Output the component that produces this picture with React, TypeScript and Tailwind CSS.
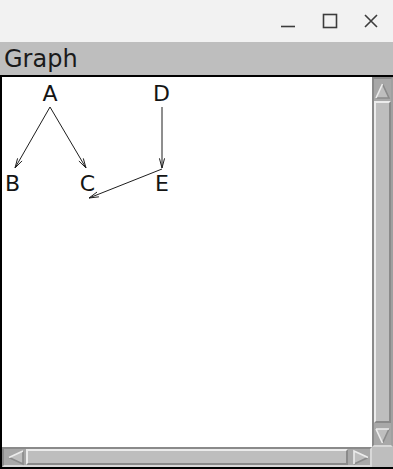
import React from "react";

type P = [number, number];

function arrowHead(from: P, to: P, len = 10, ang = 0.26): string {
  const dx = to[0] - from[0];
  const dy = to[1] - from[1];
  const a = Math.atan2(dy, dx);
  const p1: P = [to[0] - len * Math.cos(a - ang), to[1] - len * Math.sin(a - ang)];
  const p2: P = [to[0] - len * Math.cos(a + ang), to[1] - len * Math.sin(a + ang)];
  return `M${p1[0]},${p1[1]} L${to[0]},${to[1]} L${p2[0]},${p2[1]}`;
}

const edges: [P, P][] = [
  [[48, 30], [13, 91]],
  [[48, 30], [84, 91]],
  [[160, 30], [160, 91]],
  [[160, 92], [87, 121]],
];

const nodes: { t: string; x: number; y: number }[] = [
  { t: "A", x: 48, y: 23.5 },
  { t: "D", x: 159.5, y: 23.5 },
  { t: "B", x: 10.5, y: 113.5 },
  { t: "C", x: 85.5, y: 113.5 },
  { t: "E", x: 160, y: 113.5 },
];

function Arrow({ dir }: { dir: "up" | "down" | "left" | "right" }) {
  const map: Record<string, { pts: string; light: string; dark: string }> = {
    up: { pts: "8.5,2 15,16 2,16", light: "M2,16 L8.5,2", dark: "M8.5,2 L15,16 L2,16" },
    down: { pts: "2,3 15,3 8.5,17", light: "M2,3 L15,3 M2,3 L8.5,17", dark: "M15,3 L8.5,17" },
    left: { pts: "2,8.5 16,2 16,15", light: "M16,2 L2,8.5", dark: "M2,8.5 L16,15 L16,2" },
    right: { pts: "3,2 17,8.5 3,15", light: "M3,15 L3,2 L17,8.5", dark: "M17,8.5 L3,15" },
  };
  const m = map[dir];
  return (
    <svg width="17" height="17" viewBox="0 0 17 17" className="block">
      <polygon points={m.pts} fill="#bebebe" />
      <path d={m.dark} stroke="#8a8a8a" strokeWidth="1.6" fill="none" />
      <path d={m.light} stroke="#ececec" strokeWidth="1.6" fill="none" />
    </svg>
  );
}

export default function App() {
  return (
    <div className="w-[393px] h-[469px] flex flex-col bg-[#bebebe] overflow-hidden" style={{ fontFamily: '"DejaVu Sans", sans-serif' }}>
      <div className="h-[42px] bg-[#f2f2f2] flex items-center justify-end shrink-0">
        <svg width="16" height="16" viewBox="0 0 16 16" className="mr-[26px] mt-[1px]">
          <path d="M1,12.5 L15,12.5" stroke="#3c3c3c" strokeWidth="1.6" />
        </svg>
        <svg width="16" height="16" viewBox="0 0 16 16" className="mr-[25px]">
          <rect x="1.5" y="1.5" width="13" height="13" fill="none" stroke="#3c3c3c" strokeWidth="1.6" />
        </svg>
        <svg width="16" height="16" viewBox="0 0 16 16" className="mr-[14px]">
          <path d="M2,2 L14,14 M14,2 L2,14" stroke="#3c3c3c" strokeWidth="1.6" />
        </svg>
      </div>
      <div className="h-[33px] bg-[#bebebe] flex items-center pl-[4px] shrink-0">
        <span className="text-[24px] leading-none text-[#1a1a1a] mt-[1px]">Graph</span>
      </div>
      <div className="flex-1 border-t-2 border-l-2 border-b-2 border-black grid grid-cols-[1fr_21px] grid-rows-[1fr_20px]">
        <div className="bg-white relative overflow-hidden">
          <svg width="367" height="370" className="block">
            {edges.map(([a, b], i) => (
              <g key={i} stroke="#1e1e1e" strokeWidth="1" fill="none">
                <line x1={a[0]} y1={a[1]} x2={b[0]} y2={b[1]} />
                <path d={arrowHead(a, b)} />
              </g>
            ))}
            {nodes.map((n) => (
              <text
                key={n.t}
                x={n.x}
                y={n.y}
                textAnchor="middle"
                fontSize="22"
                fill="#141414"
                fontFamily='"DejaVu Sans", sans-serif'
              >
                {n.t}
              </text>
            ))}
          </svg>
        </div>
        <div className="bg-[#a8a8a8] border-l-2 border-t-2 border-[#8a8a8a] border-r-2 border-r-[#a0a0a0] border-b-2 border-b-[#d8d8d8] flex flex-col">
          <div className="h-[22px] flex items-center justify-center"><Arrow dir="up" /></div>
          <div className="flex-1 bg-[#bebebe] border-2 border-t-[#ececec] border-l-[#ececec] border-r-[#8a8a8a] border-b-[#8a8a8a]" />
          <div className="h-[22px] flex items-center justify-center"><Arrow dir="down" /></div>
        </div>
        <div className="bg-[#a8a8a8] border-l-2 border-t-2 border-[#8a8a8a] border-r-2 border-r-[#d8d8d8] border-b-2 border-b-[#d8d8d8] flex flex-row">
          <div className="w-[22px] flex items-center justify-center"><Arrow dir="left" /></div>
          <div className="flex-1 bg-[#bebebe] border-2 border-t-[#ececec] border-l-[#ececec] border-r-[#8a8a8a] border-b-[#8a8a8a]" />
          <div className="w-[22px] flex items-center justify-center"><Arrow dir="right" /></div>
        </div>
        <div className="bg-[#bebebe]" />
      </div>
    </div>
  );
}
